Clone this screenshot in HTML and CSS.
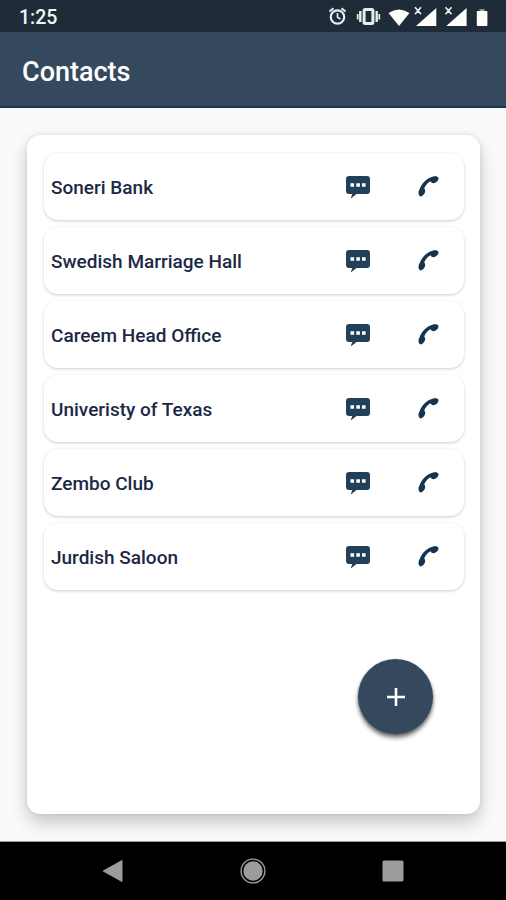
FILE: index.html
```
<!DOCTYPE html>
<html lang="en">
<head>
<meta charset="utf-8">
<title>Contacts</title>
<link rel="stylesheet" href="styles.css">
</head>
<body>
<svg class="sprite" aria-hidden="true">
  <symbol id="chat" viewBox="0 0 24 22">
    <path d="M3 0H21Q24 0 24 3V15Q24 18 21 18H10.500L5.500 22H4.800L6.300 18H3Q0 18 0 15V3Q0 0 3 0Z" fill="#23405b"/>
    <path d="M4.500 7.300h3.600v3.400H4.500zM10.300 7.300h3.600v3.400h-3.600zM16 7.300h3.600v3.400H16z" fill="#fff"/>
  </symbol>
  <symbol id="phone" viewBox="0 0 21 21">
    <path d="M2 20.300C0 18.500 .1 15.200 1.600 13.300C3.500 7.800 8.500 2.300 14.500 .7C16.800 -.1 20.300 .2 20.500 2.200C20.700 4.300 18.300 6.500 15.900 7.200C14.500 7.500 13.300 6.600 12.500 5.300C9.700 6.700 7.400 9.400 6.200 12.600C7.300 13.500 7.500 15 6.800 16.700C6 18.700 3.900 20.900 2 20.300Z" fill="#153450"/>
  </symbol>
</svg>
<header class="status">
  <span class="clock">1:25</span>
  <svg class="indicators" width="164" height="24" viewBox="0 0 164 24">
    <g fill="none" stroke="#e9ebed">
      <circle cx="9.500" cy="13" r="6.700" stroke-width="2.200"/>
      <path d="M9.500 9v4.200l3 2" stroke-width="1.600"/>
      <path d="M1.500 7.500l4-3.300M17.500 7.500l-4-3.300" stroke-width="2"/>
      <rect x="36.100" y="5.500" width="8.800" height="14" rx="1" stroke-width="3"/>
      <path d="M32.300 7v11M48.700 7v11" stroke-width="2.400"/>
      <path d="M29.700 10v5.500M51.300 10v5.500" stroke-width="1.700"/>
      <path d="M87 3.300l6 7M93 3.300l-6 7M117.500 3.300l6 7M123.500 3.300l-6 7" stroke-width="1.700"/>
    </g>
    <g fill="#fff">
      <path d="M60.500 9Q71 2 81.500 9L71 22Z"/>
      <path d="M108.300 4V22H88ZM138.600 4V22H118.300Z"/>
      <rect x="148.800" y="7" width="10.600" height="15" rx=".8"/>
      <path d="M151.500 5h5v2h-5z" opacity=".5"/>
    </g>
  </svg>
</header>
<h1 class="toolbar">Contacts</h1>
<main class="content">
  <section class="card">
    <ul class="list">
      <li class="row"><span class="name">Soneri Bank</span><svg class="chat"><use href="#chat"/></svg><svg class="phone"><use href="#phone"/></svg></li>
      <li class="row"><span class="name">Swedish Marriage Hall</span><svg class="chat"><use href="#chat"/></svg><svg class="phone"><use href="#phone"/></svg></li>
      <li class="row"><span class="name">Careem Head Office</span><svg class="chat"><use href="#chat"/></svg><svg class="phone"><use href="#phone"/></svg></li>
      <li class="row"><span class="name">Univeristy of Texas</span><svg class="chat"><use href="#chat"/></svg><svg class="phone"><use href="#phone"/></svg></li>
      <li class="row"><span class="name">Zembo Club</span><svg class="chat"><use href="#chat"/></svg><svg class="phone"><use href="#phone"/></svg></li>
      <li class="row"><span class="name">Jurdish Saloon</span><svg class="chat"><use href="#chat"/></svg><svg class="phone"><use href="#phone"/></svg></li>
    </ul>
    <button class="fab" aria-label="Add contact"><svg width="18" height="18" viewBox="0 0 18 18"><path d="M9 0v18M0 9h18" stroke="#fff" stroke-width="2.600"/></svg></button>
  </section>
</main>
<nav class="navbar">
  <svg width="22" height="24" viewBox="0 0 22 24"><path d="M1.200 12L20 1.500V22.500Z" fill="#9c9c9c" stroke="#9c9c9c" stroke-linejoin="round"/></svg>
  <svg width="26" height="26" viewBox="0 0 26 26"><circle cx="13" cy="13" r="11.900" fill="none" stroke="#9c9c9c" stroke-width="1.400"/><circle cx="13" cy="13" r="9.700" fill="#9c9c9c"/></svg>
  <svg width="22" height="22" viewBox="0 0 22 22"><rect x=".5" y=".5" width="21" height="21" rx="1.500" fill="#9c9c9c"/></svg>
</nav>
</body>
</html>
```
FILE: styles.css
```
* { box-sizing: border-box; }
body {
  margin: 0;
  width: 506px;
  height: 900px;
  display: flex;
  flex-direction: column;
  overflow: hidden;
  background: #fafafa;
  font-family: Roboto, "Liberation Sans", sans-serif;
}
.sprite { display: none; }
.status {
  flex: none;
  height: 32px;
  display: flex;
  justify-content: space-between;
  align-items: flex-start;
  padding: 4px 14px 0 19px;
  background: #1f2b38;
  color: #f4f5f6;
}
.clock { font-size: 19.5px; line-height: 27px; font-weight: 500; }
.indicators { display: block; }
.toolbar {
  flex: none;
  height: 76px;
  margin: 0;
  padding: 3px 22px 0;
  border-bottom: 2px solid #15384f;
  background: #34495e;
  color: #fff;
  font-size: 27px;
  line-height: 74px;
  font-weight: 500;
}
.content {
  flex: 1;
  padding: 27px 26px 28px 27px;
  overflow: hidden;
  border-bottom: 1px solid #999;
}
.card {
  height: 679px;
  padding: 18px 16px 0 17px;
  display: flex;
  flex-direction: column;
  border-radius: 13px;
  background: #fff;
  box-shadow: 0 9px 18px rgba(0,0,0,.2), 0 0 5px rgba(0,0,0,.1);
}
.list {
  margin: 0;
  padding: 0;
  list-style: none;
  display: flex;
  flex-direction: column;
  gap: 7px;
}
.row {
  height: 67px;
  display: flex;
  align-items: center;
  padding: 0 25px 0 7px;
  border-radius: 14px;
  background: #fff;
  box-shadow: 0 1px 3px rgba(0,0,0,.2);
}
.name {
  flex: 1;
  padding-top: 2px;
  color: #1c2945;
  font-size: 19px;
  line-height: 24px;
  font-weight: 500;
  white-space: nowrap;
}
.chat { width: 24px; height: 22px; margin-right: 48px; }
.phone { width: 21px; height: 21px; }
.fab {
  width: 75px;
  height: 75px;
  margin: 69px 31px 0 auto;
  padding: 0;
  display: flex;
  align-items: center;
  justify-content: center;
  border: 0;
  border-radius: 50%;
  background: #34495e;
  box-shadow: 0 4px 4px rgba(0,0,0,.5), 0 1px 3px rgba(0,0,0,.3);
}
.navbar {
  flex: none;
  height: 58px;
  display: flex;
  align-items: center;
  justify-content: space-between;
  padding: 0 102px;
  background: #000;
}
```
